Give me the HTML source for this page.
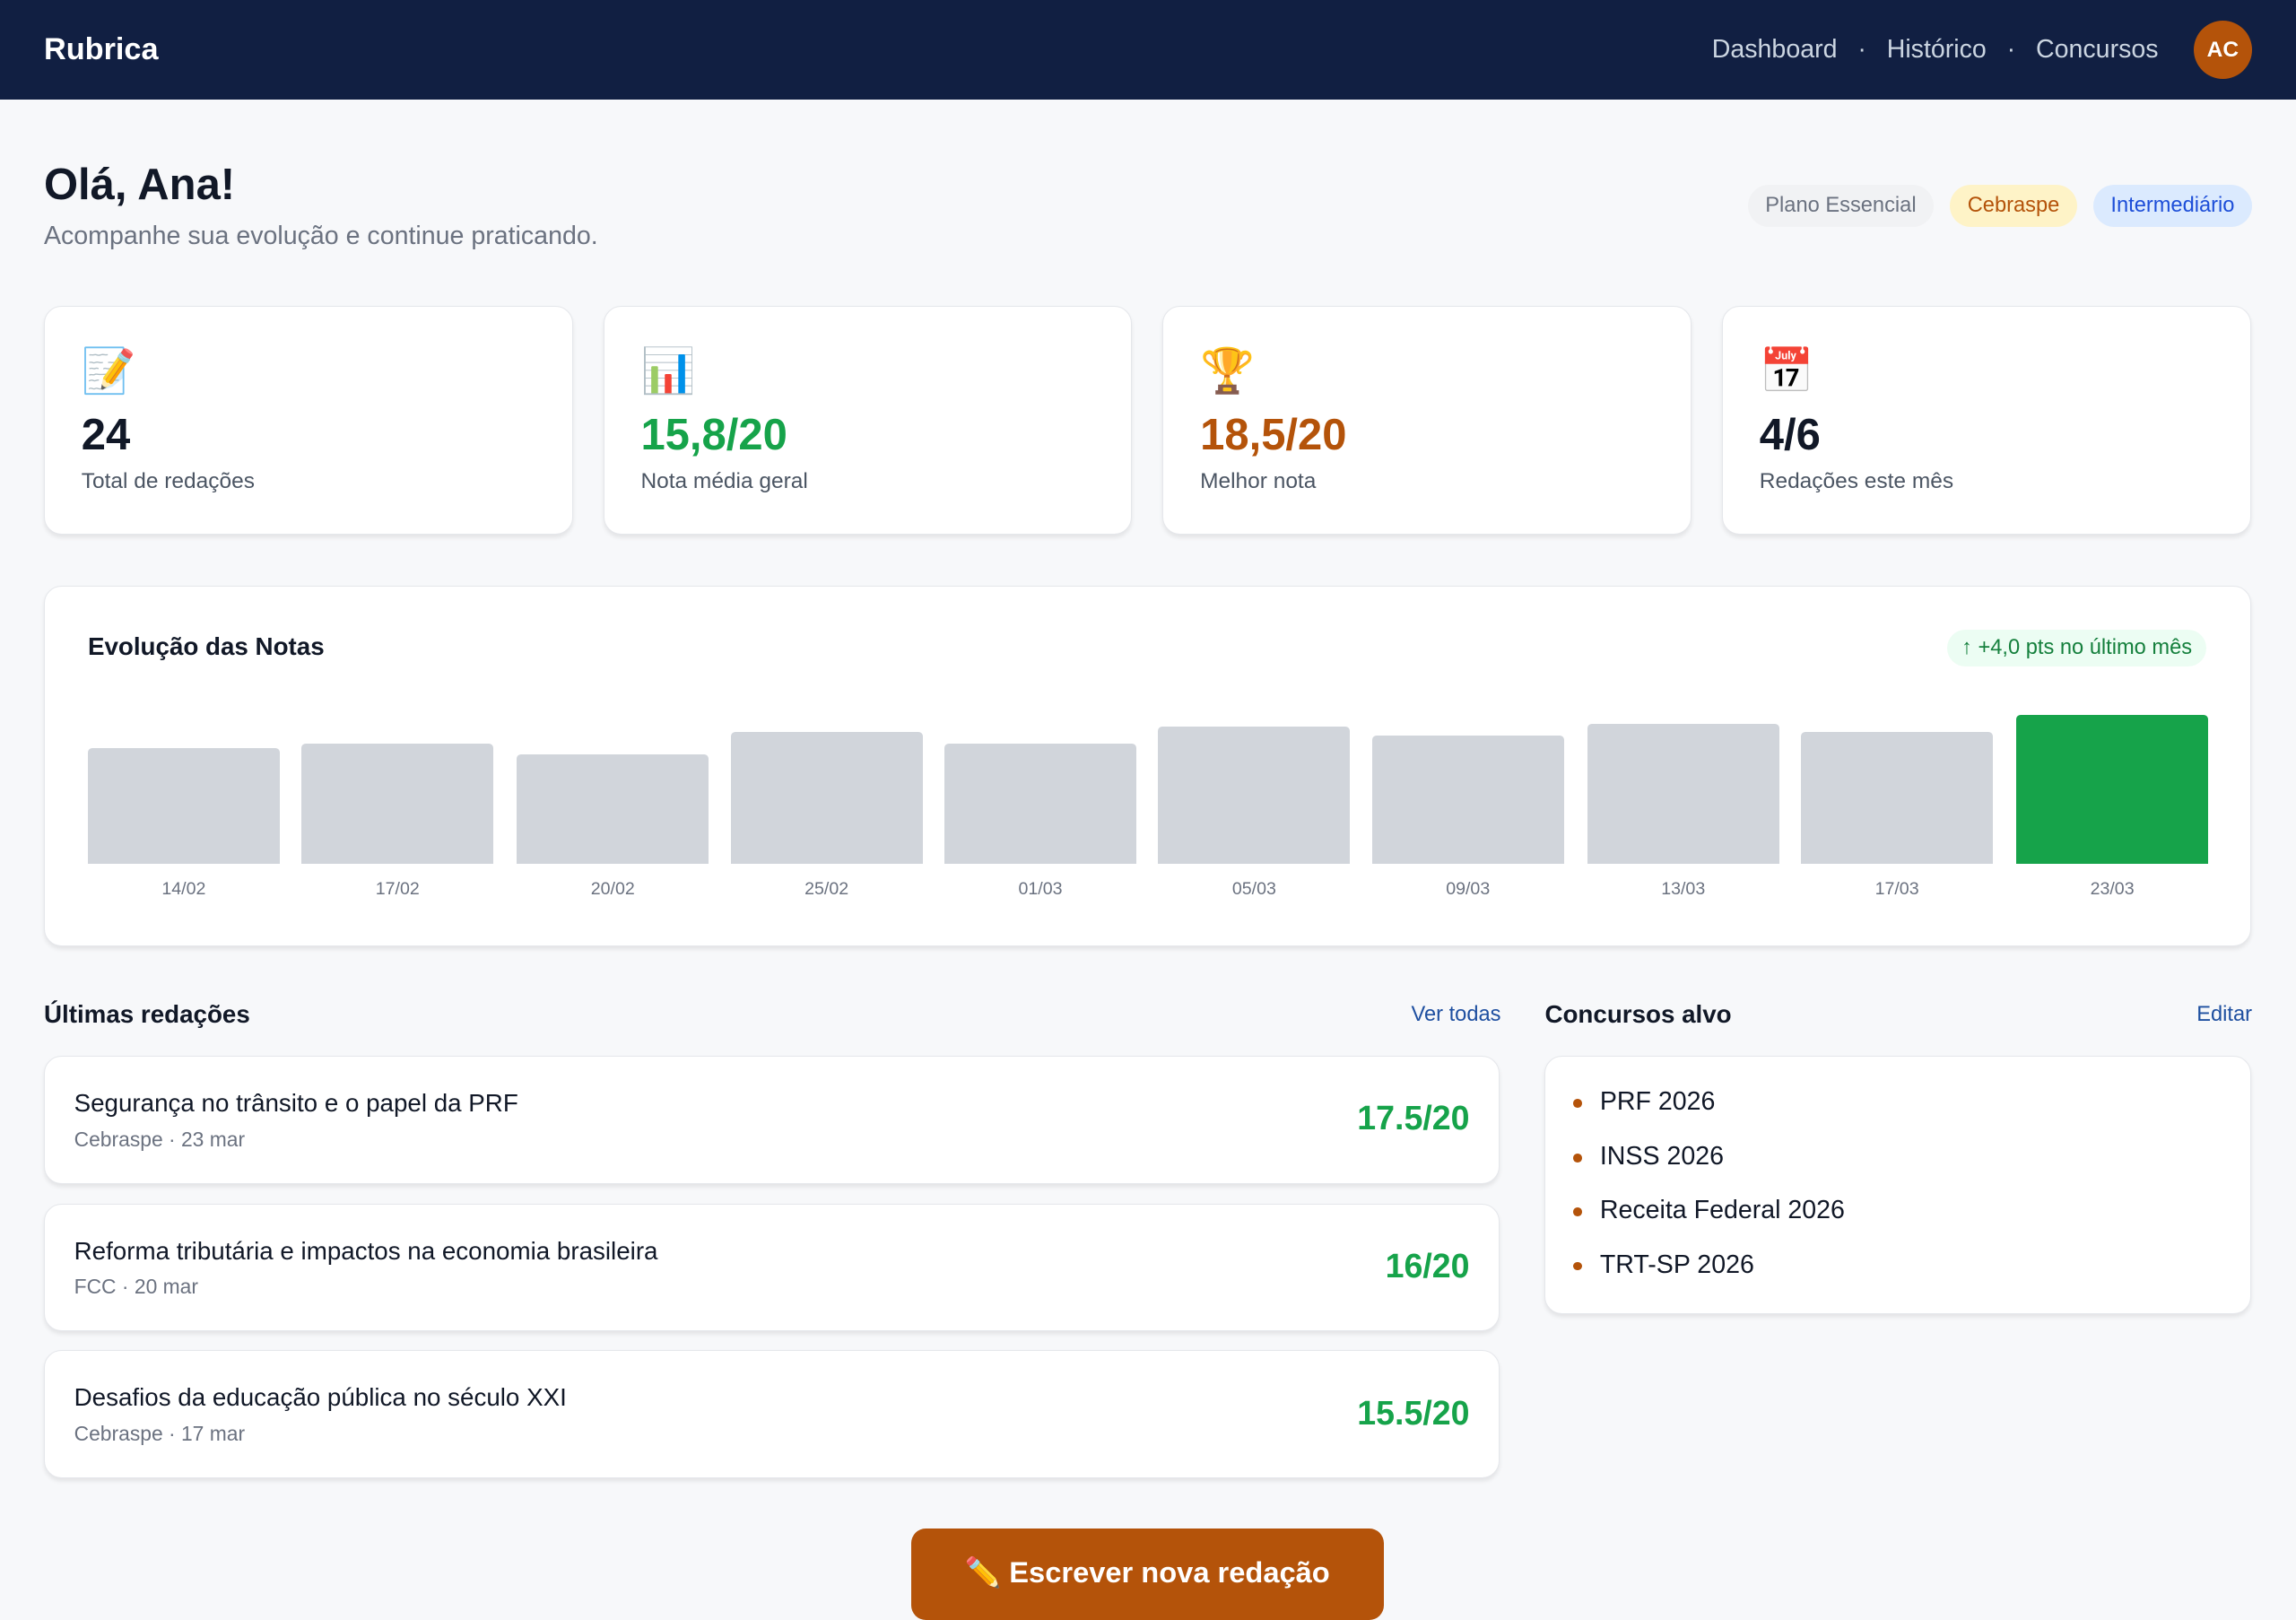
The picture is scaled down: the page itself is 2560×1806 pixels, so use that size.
<!DOCTYPE html>
<html><head><meta charset="utf-8"><style>
html,body{margin:0;padding:0}
body{width:1568px;height:1103px;overflow:hidden;zoom:1.632653;background:#f7f8fa;font-family:"Liberation Sans","Noto Sans CJK JP",sans-serif;color:#111827;position:relative}
.a{position:absolute}
nav{position:absolute;left:0;top:0;width:1568px;height:68px;background:#111f42}
.card{position:absolute;background:#fff;border:1px solid #e5e7eb;border-radius:12px;box-shadow:0 2px 3px rgba(0,0,0,.08)}
.badges{position:absolute;right:30px;top:126px;display:flex;gap:11px}
.badge{height:29px;line-height:29px;border-radius:15px;font-size:14.5px;padding:0 12px}
.val{position:absolute;left:25px;top:70px;font-size:30px;font-weight:bold}
.lab{position:absolute;left:25px;top:111px;font-size:15px;color:#4b5563}
.ico{position:absolute;left:25px;top:26px;font-size:30px;line-height:36px}
.bar{position:absolute;bottom:0;width:131px;background:#d1d5db;border-radius:3px 3px 0 0}
.bl{position:absolute;top:600px;width:131px;text-align:center;font-size:12px;color:#6b7280}
.ess .t{position:absolute;left:20px;top:22px;font-size:17px}
.ess .m{position:absolute;left:20px;top:48px;font-size:14px;color:#6b7280}
.ess .s{position:absolute;right:20px;top:29px;font-size:23px;font-weight:bold;color:#16a34a}
.li{position:absolute;left:37px;font-size:17.5px}
.li:before{content:"";position:absolute;left:-18px;top:8px;width:6px;height:6px;border-radius:3px;background:#b4530a}
</style></head><body>
<nav>
<div class="a" style="left:30px;top:22px;font-size:21px;font-weight:bold;color:#fff">Rubrica</div>
<div class="a" style="right:94px;top:24px;font-size:17.5px;color:#cbd5e1;white-space:nowrap">Dashboard<span style="margin:0 14px">·</span>Histórico<span style="margin:0 14px">·</span>Concursos</div>
<div class="a" style="left:1498px;top:14px;width:40px;height:40px;border-radius:20px;background:#b4530a;color:#fff;font-weight:bold;font-size:15px;text-align:center;line-height:40px">AC</div>
</nav>
<div class="a" style="left:30px;top:109px;font-size:30px;font-weight:bold">Olá, Ana!</div>
<div class="a" style="left:30px;top:151px;font-size:17.5px;color:#6b7280">Acompanhe sua evolução e continue praticando.</div>
<div class="badges">
<div class="badge" style="background:#f1f2f4;color:#6b7280">Plano Essencial</div>
<div class="badge" style="background:#fef3c7;color:#b4530a">Cebraspe</div>
<div class="badge" style="background:#dbeafe;color:#1d4ed8">Intermediário</div>
</div>

<div class="card" style="left:30px;top:209px;width:360px;height:155px"><div class="ico">📝</div><div class="val">24</div><div class="lab">Total de redações</div></div>
<div class="card" style="left:412px;top:209px;width:360px;height:155px"><div class="ico">📊</div><div class="val" style="color:#16a34a">15,8/20</div><div class="lab">Nota média geral</div></div>
<div class="card" style="left:794px;top:209px;width:360px;height:155px"><div class="ico">🏆</div><div class="val" style="color:#b4530a">18,5/20</div><div class="lab">Melhor nota</div></div>
<div class="card" style="left:1176px;top:209px;width:360px;height:155px"><div class="ico">📅</div><div class="val">4/6</div><div class="lab">Redações este mês</div></div>

<div class="card" style="left:30px;top:400px;width:1506px;height:245px"></div>
<div class="a" style="left:60px;top:432px;font-size:17px;font-weight:bold">Evolução das Notas</div>
<div class="a" style="right:61px;top:430px;height:25px;line-height:25px;padding:0 10px;border-radius:13px;background:#ecfdf3;color:#15803d;font-size:14.5px">↑ +4,0 pts no último mês</div>
<div class="a" style="left:0;top:0;width:1568px;height:590px">
<div class="bar" style="left:60px;height:79px"></div>
<div class="bar" style="left:206px;height:82px"></div>
<div class="bar" style="left:353px;height:75px"></div>
<div class="bar" style="left:499px;height:90px"></div>
<div class="bar" style="left:645px;height:82px"></div>
<div class="bar" style="left:791px;height:94px"></div>
<div class="bar" style="left:937px;height:88px"></div>
<div class="bar" style="left:1084px;height:96px"></div>
<div class="bar" style="left:1230px;height:90px"></div>
<div class="bar" style="left:1377px;height:102px;background:#16a34a"></div>
</div>
<div class="bl" style="left:60px">14/02</div><div class="bl" style="left:206px">17/02</div><div class="bl" style="left:353px">20/02</div><div class="bl" style="left:499px">25/02</div><div class="bl" style="left:645px">01/03</div><div class="bl" style="left:791px">05/03</div><div class="bl" style="left:937px">09/03</div><div class="bl" style="left:1084px">13/03</div><div class="bl" style="left:1230px">17/03</div><div class="bl" style="left:1377px">23/03</div>

<div class="a" style="left:30px;top:683px;font-size:17px;font-weight:bold">Últimas redações</div>
<div class="a" style="right:543px;top:685px;font-size:14.5px;color:#1e4fa0">Ver todas</div>
<div class="a" style="left:1055px;top:683px;font-size:17px;font-weight:bold">Concursos alvo</div>
<div class="a" style="right:30px;top:685px;font-size:14.5px;color:#1e4fa0">Editar</div>

<div class="card ess" style="left:30px;top:721px;width:993px;height:86px"><div class="t">Segurança no trânsito e o papel da PRF</div><div class="m">Cebraspe · 23 mar</div><div class="s">17.5/20</div></div>
<div class="card ess" style="left:30px;top:822px;width:993px;height:86px"><div class="t">Reforma tributária e impactos na economia brasileira</div><div class="m">FCC · 20 mar</div><div class="s">16/20</div></div>
<div class="card ess" style="left:30px;top:922px;width:993px;height:86px"><div class="t">Desafios da educação pública no século XXI</div><div class="m">Cebraspe · 17 mar</div><div class="s">15.5/20</div></div>

<div class="card" style="left:1055px;top:721px;width:481px;height:175px">
<div class="li" style="top:21px">PRF 2026</div>
<div class="li" style="top:58px">INSS 2026</div>
<div class="li" style="top:95px">Receita Federal 2026</div>
<div class="li" style="top:132px">TRT-SP 2026</div>
</div>

<div class="a" style="left:622px;top:1044px;width:323px;height:62px;border-radius:10px;background:#b4530a;color:#fff;font-size:20px;font-weight:bold;text-align:center;line-height:60px">✏️ Escrever nova redação</div>
</body></html>
